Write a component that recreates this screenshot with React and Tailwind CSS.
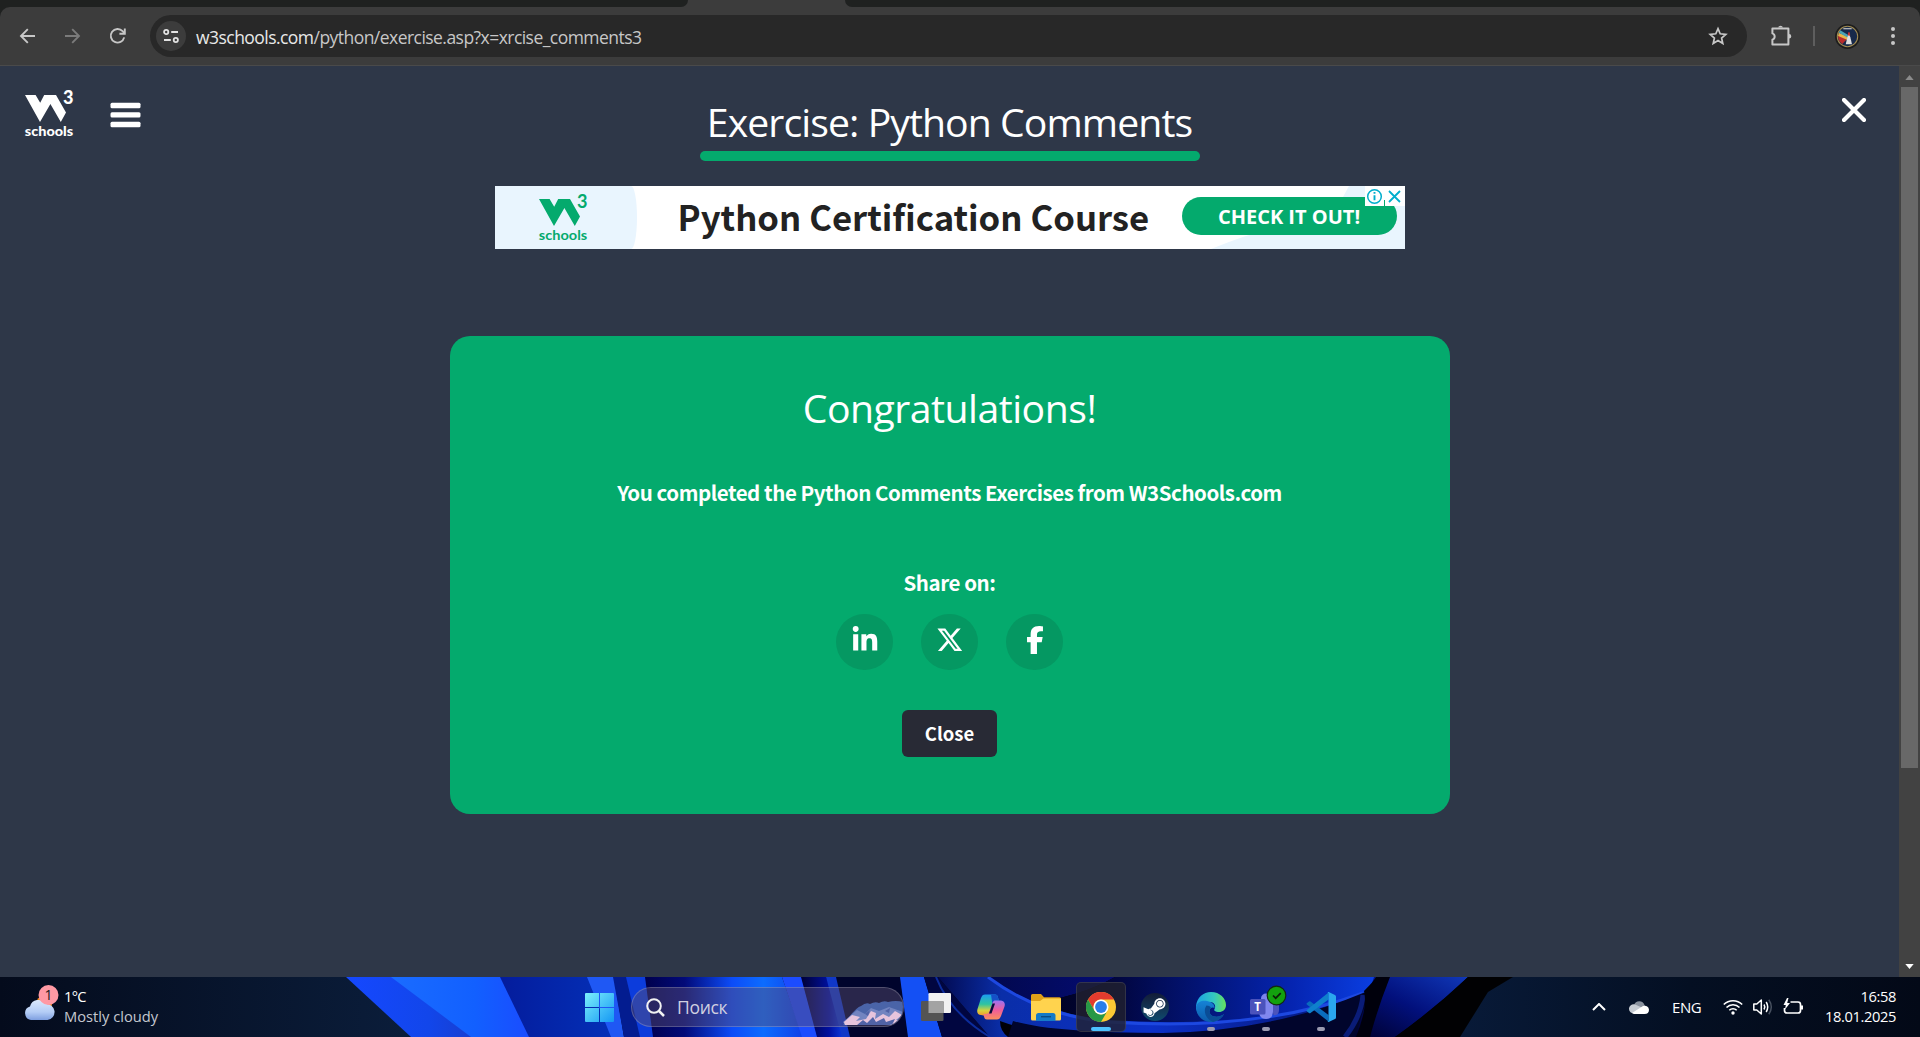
import React from "react";
import { FaLinkedinIn, FaFacebookF, FaXTwitter, FaSteamSymbol } from "react-icons/fa6";

const segoe = "font-['Open_Sans','Noto_Sans',sans-serif]";
const source = "font-['Noto_Sans_CJK_SC','Open_Sans',sans-serif]";

function W3Logo({ className, weight }) {
  return (
    <svg viewBox="0 0 54 58" className={className} fill="currentColor">
      <path d="M1 10h10.600l4.600 7.800L20.200 10H32l10 17.600L36.800 37 26.400 18.900 16 37z" />
      <text x="39" y="19.300" fontSize="18.500" fontWeight={weight} fontFamily="Lato, sans-serif" textLength="10.500" lengthAdjust="spacingAndGlyphs">3</text>
      <text x="0.800" y="51.200" fontSize="14" fontWeight={weight} fontFamily="Lato, sans-serif" textLength="48.400" lengthAdjust="spacingAndGlyphs">schools</text>
    </svg>
  );
}

function Toolbar() {
  return (
    <header className="bg-[#1f2120]">
      <div className="flex h-[7px] justify-between bg-[#3c3c3c]">
        <div className="w-[688px] rounded-br-[10px] bg-[#1f2120]" />
        <div className="w-[1075px] rounded-bl-[10px] bg-[#1f2120]" />
      </div>
      <div className="flex h-[59px] items-center rounded-t-[10px] border-b border-[#4a4a4a] bg-[#3c3c3c]">
        <div className="ml-[17px] flex w-[133px] gap-[23px] text-[#c7c7c7]">
          <svg viewBox="0 0 22 22" className="size-[22px]" fill="none" stroke="currentColor" strokeWidth="1.9"><path d="M18 11H4.500M10.800 4.200 4 11l6.800 6.800" /></svg>
          <svg viewBox="0 0 22 22" className="size-[22px] text-[#7b7b7b]" fill="none" stroke="currentColor" strokeWidth="1.9"><path d="M3 11h13.500M10.200 4.200 17 11l-6.800 6.800" /></svg>
          <svg viewBox="0 0 22 22" className="size-[22px]" fill="none" stroke="currentColor" strokeWidth="1.9"><path d="M17.200 12.400A6.800 6.800 0 1 1 15.600 6.200L17.600 8.400" /><path d="M17.800 3.400v5.400h-5.400" /></svg>
        </div>
        <div className="flex h-[42px] w-[1597px] items-center rounded-full bg-[#282828] pl-[6px] pr-[19px]">
          <div className="flex size-[30px] items-center justify-center rounded-full bg-[#3c3c3c] text-[#e3e3e3]">
            <svg viewBox="0 0 16 16" className="size-4" fill="none" stroke="currentColor" strokeWidth="1.8"><circle cx="3.2" cy="4" r="2.1" /><path d="M8.200 4H15M1 12h6.800" /><circle cx="12.8" cy="12" r="2.1" /></svg>
          </div>
          <div className={`ml-[10px] mt-[1px] text-[17.500px] leading-[24px] tracking-[-0.54px] text-[#c7c7c7] ${segoe}`}>
            <span className="text-[#e8e8e8]">w3schools.com</span>/python/exercise.asp?x=xrcise_comments3
          </div>
          <svg viewBox="0 0 20 20" className="ml-auto size-[20px] text-[#c7c7c7]" fill="none" stroke="currentColor" strokeWidth="1.7"><path d="m10 2.600 2.200 5.200 5.600.5-4.200 3.700 1.200 5.500L10 14.600l-4.800 2.900 1.200-5.500-4.200-3.700 5.600-.5z" /></svg>
        </div>
        <svg viewBox="0 0 24 24" className="mb-[2px] ml-[22px] size-[24px] text-[#c7c7c7]" fill="none" stroke="currentColor" strokeWidth="2"><path d="M3.400 5.400h16v16h-16v-4.600a3.400 3.400 0 0 0 0-6.400z" strokeLinejoin="round" /><path d="M9.200 4.600a2.500 2.500 0 0 1 4.800 0zM20 11a2.300 2.300 0 0 1 0 4.600z" fill="currentColor" stroke="none" /></svg>
        <div className="ml-[20px] h-[20px] w-[2px] bg-[#5e5e5e]" />
        <svg viewBox="0 0 24 24" className="ml-[20px] size-[25px]">
          <circle cx="12" cy="12" r="12" fill="#1d1d1d" />
          <circle cx="12" cy="12" r="9.800" fill="#17294a" stroke="#a08b52" strokeWidth="1" />
          <path d="M3 10.500 13 13l-6 6.300A10 10 0 0 1 3 10.500z" fill="#b92c2c" />
          <path d="m3.600 8.500 9 3.700-1 3L3 11.500z" fill="#e8b64a" />
          <path d="m5 6 8.500 5-1.500 2-8.300-4.600z" fill="#4ba3b5" />
          <path d="m13.300 9 1.500 4 1.500 6.500h-6l1.500-6.500z" fill="#e0e0e0" />
          <path d="M12.700 8h1.400l.5 3h-2.400z" fill="#c83232" />
          <path d="M8 4.500h8" stroke="#bababa" strokeWidth="1.200" />
        </svg>
        <svg viewBox="0 0 6 20" className="ml-[30px] h-[20px] w-[6px]" fill="#c7c7c7"><circle cx="3" cy="3" r="2" /><circle cx="3" cy="10" r="2" /><circle cx="3" cy="17" r="2" /></svg>
      </div>
    </header>
  );
}

function AdBanner() {
  return (
    <div className="relative mt-[25px] flex h-[63px] w-[910px] items-center overflow-hidden bg-white">
      <div className="flex h-[63px] w-[142px] items-center bg-[#e9f5fe] pl-[43px] text-[#04aa6d] [border-radius:0_6px_6px_0/0_31px_31px_0]">
        <W3Logo className="h-[58px] w-[54px]" weight="700" />
      </div>
      <svg viewBox="0 0 230 63" className="absolute right-0 top-0 h-[63px] w-[230px]" fill="#e9f5fe"><path d="M230 0h-56l-12 22v20h-62Q72 48 36 63h194z" /></svg>
      <div className={`mb-[3px] ml-[41px] text-[34.700px] font-bold leading-[40px] whitespace-nowrap text-[#222] ${source}`}>Python Certification Course</div>
      <div className="absolute left-[687px] top-[11px] flex h-[38px] w-[215px] items-center justify-center rounded-full bg-[#04aa6d]">
        <span className="mt-[2px] font-['Open_Sans',sans-serif] text-[20px] font-bold leading-[24px] whitespace-nowrap text-white">CHECK IT OUT!</span>
      </div>
      <div className="absolute right-0 top-0 flex h-[20px] w-[40px] bg-white">
        <svg viewBox="0 0 40 20" className="h-[20px] w-[40px]" fill="none" stroke="#00aecd" strokeWidth="1.500"><circle cx="9.500" cy="10.500" r="6.800" /><path d="M9.500 9.300v5M9.500 6v1.800" strokeWidth="1.900" /><path d="m24 5 11 11m0-11L24 16" strokeWidth="1.800" /><path d="M19.500 14v6" stroke="#04aa6d" strokeWidth="1" /></svg>
      </div>
    </div>
  );
}

function ShareButton({ children }) {
  return <div className="flex h-[56px] w-[57px] items-center justify-center rounded-full bg-[#059862] pb-[4px] text-white">{children}</div>;
}

function Page() {
  return (
    <main className="flex h-[911px]">
      <div className="relative flex w-[1899px] flex-col items-center bg-[#2e3748]">
        <div className="absolute left-[24px] top-[19px] flex text-white">
          <W3Logo className="h-[58px] w-[54px]" weight="900" />
          <svg viewBox="0 0 30 26" className="ml-[32px] mt-[17px] h-[26px] w-[31px]" fill="currentColor"><rect width="30" height="5.400" y="0.800" rx="1.500" /><rect width="30" height="5.400" y="10.200" rx="1.500" /><rect width="30" height="5.400" y="19.800" rx="1.500" /></svg>
        </div>
        <svg viewBox="0 0 24 24" className="absolute right-[33px] top-[32px] size-[24px]" stroke="#fff" strokeWidth="4.200" strokeLinecap="round"><path d="m2 2 20 20M22 2 2 22" /></svg>
        <h1 className={`mt-[28px] flex h-[57px] w-[500px] justify-center text-[39.200px] leading-[56px] tracking-[-0.93px] whitespace-nowrap text-white ${segoe}`}>Exercise: Python Comments</h1>
        <div className="h-[10px] w-[500px] rounded-full bg-[#04aa6d]" />
        <AdBanner />
        <section className="mt-[87px] flex h-[478px] w-[1000px] flex-col items-center rounded-[20px] bg-[#04aa6d] text-white">
          <h2 className={`mt-[44px] text-[39.200px] leading-[56px] tracking-[-0.5px] ${segoe}`}>Congratulations!</h2>
          <p className={`mt-[41px] text-[20.500px] font-bold leading-[30px] tracking-[-0.46px] ${source}`}>You completed the Python Comments Exercises from W3Schools.com</p>
          <p className={`mt-[60px] text-[20.500px] font-bold leading-[30px] tracking-[-0.42px] ${source}`}>Share on:</p>
          <div className="mt-[17px] flex gap-[28px]">
            <ShareButton><FaLinkedinIn className="size-[28px]" /></ShareButton>
            <ShareButton><FaXTwitter className="size-[27.500px]" /></ShareButton>
            <ShareButton><FaFacebookF className="size-[28px]" /></ShareButton>
          </div>
          <button className={`mt-[40px] h-[47px] w-[95px] rounded-[6px] bg-[#282a35] pb-[2px] text-[18.500px] font-bold leading-[28px] ${source}`}>Close</button>
        </section>
      </div>
      <div className="flex w-[21px] flex-col items-center justify-between bg-[#424242]">
        <svg viewBox="0 0 10 6" className="mt-[9px] h-[5px] w-[9px]" fill="#8b8b8b"><path d="M5 0l5 6H0z" /></svg>
        <div className="mb-auto mt-[7px] h-[681px] w-[17px] bg-[#686868]" />
        <svg viewBox="0 0 10 6" className="mb-[8px] h-[5px] w-[9px]" fill="#fff"><path d="M5 6l5-6H0z" /></svg>
      </div>
    </main>
  );
}

function Wallpaper() {
  return (
    <svg viewBox="0 0 1920 60" className="absolute inset-0 h-[60px] w-full" preserveAspectRatio="none">
      <defs>
        <linearGradient id="sideL"><stop offset="0" stopColor="#040b1c" /><stop offset="1" stopColor="#0b1e3c" /></linearGradient>
        <linearGradient id="sideR"><stop offset="0" stopColor="#081a38" /><stop offset=".5" stopColor="#040f22" /><stop offset="1" stopColor="#030917" /></linearGradient>
        <linearGradient id="b1"><stop offset="0" stopColor="#1548ff" /><stop offset=".6" stopColor="#1246ea" /><stop offset="1" stopColor="#1a3cc8" /></linearGradient>
        <linearGradient id="b2"><stop offset="0" stopColor="#1a6cff" /><stop offset=".6" stopColor="#1260ff" /><stop offset="1" stopColor="#1a4cff" /></linearGradient>
        <linearGradient id="b3"><stop offset="0" stopColor="#041c9c" /><stop offset="1" stopColor="#0430b8" /></linearGradient>
        <linearGradient id="b4"><stop offset="0" stopColor="#00004c" /><stop offset=".25" stopColor="#020a78" /><stop offset=".55" stopColor="#0c4cf8" /><stop offset=".75" stopColor="#0c6cff" /><stop offset="1" stopColor="#1040e8" /></linearGradient>
        <linearGradient id="b5"><stop offset="0" stopColor="#000034" /><stop offset=".6" stopColor="#0010a0" /><stop offset="1" stopColor="#1048f0" /></linearGradient>
        <linearGradient id="b6"><stop offset="0" stopColor="#000018" /><stop offset=".2" stopColor="#010640" /><stop offset=".6" stopColor="#0524b0" /><stop offset=".85" stopColor="#0c46f0" /><stop offset="1" stopColor="#0a2fa8" /></linearGradient>
        <linearGradient id="b7" x1="0" y1="1" x2="1" y2="0"><stop offset="0" stopColor="#00002c" /><stop offset=".5" stopColor="#02107c" /><stop offset="1" stopColor="#1038b8" /></linearGradient>
        <linearGradient id="b8"><stop offset="0" stopColor="#020a50" /><stop offset=".15" stopColor="#0a2ea8" /><stop offset=".5" stopColor="#0c30c8" /><stop offset="1" stopColor="#04146c" /></linearGradient>
        <linearGradient id="b9"><stop offset="0" stopColor="#02084c" /><stop offset="1" stopColor="#040c74" /></linearGradient>
      </defs>
      <rect width="1920" height="60" fill="#000006" />
      <rect width="430" height="60" fill="url(#sideL)" />
      <path d="M346 0h60l80 60h-75z" fill="url(#b1)" />
      <path d="M391 0h110l29 60h-59z" fill="url(#b2)" />
      <path d="M500 0h90l24 60h-85z" fill="url(#b3)" />
      <path d="M587 0h27l10 60h-13z" fill="#1f58f4" />
      <path d="M613 0h14l14 60h-17z" fill="#031c90" />
      <path d="M626 0h30v60h-16z" fill="#0c3cdc" />
      <path d="M645 0h137l21 60H653z" fill="url(#b4)" />
      <path d="M782 0h20l16 60h-16z" fill="#1c4cff" />
      <path d="M801 0h30l17 60h-31z" fill="url(#b5)" />
      <path d="M826 0h75l8 60h-61z" fill="#00042c" />
      <path d="M826 0h10l14 60h-8z" fill="#1038c8" />
      <path d="M900 0h24l18 60h-34z" fill="#1450f4" />
      <path d="M924 0h14l52 60h-48z" fill="#010640" />
      <path d="M985 0h130Q1080 20 1030 26 1005 14 985 0z" fill="url(#b9)" />
      <path d="M1100 0h364L1363 16Q1290 48 1150 46 1080 42 1030 26q50-6 85-26z" fill="url(#b6)" />
      <path d="M938 0h50q50 36 120 43 150 10 255-27-100 50-190 48-120 0-173-20 0 10 8 16h-18z" fill="url(#b8)" />
      <path d="M936 0q14 36 54 60" fill="none" stroke="#0c2c9c" strokeWidth="2" />
      <path d="M988 0q50 38 120 45 150 10 255-29" fill="none" stroke="#1d48e0" strokeWidth="3" />
      <path d="M1363 16q-90 38-200 40-110 0-150-12l-5 16h360q12-26 8-42z" fill="#01052c" />
      <path d="M1363 18q-2 22-18 42" fill="none" stroke="#0a1c78" strokeWidth="5" />
      <path d="M1374 0h94q-34 32-73 60h-40z" fill="url(#b7)" />
      <path d="M1364 14Q1374 4 1376 0h14q-12 30-20 60h-14q12-30 8-46z" fill="#00000c" />
      <path d="M1468 0h48l-56 60h-65q40-28 73-60z" fill="#010103" />
      <path d="M1513 0h407v60h-460l28-45z" fill="url(#sideR)" />
    </svg>
  );
}

function ChromeIcon() {
  return (
    <svg viewBox="0 0 30 30" className="size-[30px]">
      <circle cx="15" cy="15" r="15" fill="#fcc934" />
      <path d="M2 7.500A15 15 0 0 1 28 7.500H15a7.500 7.500 0 0 0-6.500 11.300z" fill="#e33b2e" />
      <path d="M2 7.500 8.500 18.800A7.500 7.500 0 0 0 21.500 18.800L15 30A15 15 0 0 1 2 7.500z" fill="#279847" />
      <circle cx="15" cy="15" r="7.500" fill="#fff" /><circle cx="15" cy="15" r="5.900" fill="#2a7de9" />
    </svg>
  );
}

function EdgeIcon() {
  return (
    <svg viewBox="0 0 30 30" className="size-[30px]">
      <defs>
        <linearGradient id="e1"><stop offset="0" stopColor="#1aa0e4" /><stop offset=".6" stopColor="#34c8c0" /><stop offset="1" stopColor="#66e05c" /></linearGradient>
        <linearGradient id="e2" x1="0" y1="0" x2="0" y2="1"><stop offset="0" stopColor="#1583d6" /><stop offset="1" stopColor="#0c5cab" /></linearGradient>
      </defs>
      <path d="M0 14C1 5.500 7.300 0 15 0c9 0 15 6.500 15 13 0 4.500-3.300 7-7 7-3.500 0-5.500-1.400-4.500-3 2-3.500-.5-7-5-7C7 10 1.500 13 0 19z" fill="url(#e1)" />
      <path d="M0 15C1 9.500 7 8 11 9c5.500 1 8 4 7.500 7-2-1.500-5 0-5 3.500 0 5 8 7.500 14.500 2.500C25.500 27 20.500 30 15 30 6.500 30 0 23.500 0 15z" fill="url(#e2)" />
      <path d="M10.500 13.500C7 18 9 27 17 29.900c5-.8 9-4 11-7.900-6.500 5-14.500 2.500-14.500-2.500 0-1.800.6-3 1.500-3.700-1-1.600-2.500-2.300-4.500-2.300z" fill="#0a4d96" />
    </svg>
  );
}

const apps = [
  { name: "Task view", icon: (
    <svg viewBox="0 0 30 28" className="h-[28px] w-[30px]"><rect x="7.500" width="22.500" height="20" rx="1.300" fill="#f1f1f1" /><rect y="8" width="22.500" height="20" rx="1.300" fill="#545454" /><path d="M7.500 8h15v12h-15z" fill="#a3a3a3" /></svg>) },
  { name: "Copilot", icon: (
    <svg viewBox="0 0 28 26" className="h-[26px] w-[28px]">
      <defs>
        <linearGradient id="c1" x1="0" y1="0" x2="0" y2="1"><stop offset="0" stopColor="#1b9df0" /><stop offset=".45" stopColor="#2fc4a0" /><stop offset=".75" stopColor="#d9d23c" /><stop offset="1" stopColor="#f4912a" /></linearGradient>
        <linearGradient id="c2" x1="0" y1="0" x2="0" y2="1"><stop offset="0" stopColor="#9b72f2" /><stop offset=".5" stopColor="#ee5c9c" /><stop offset="1" stopColor="#fb8f5c" /></linearGradient>
      </defs>
      <path d="M8 .5h10c2 0 2.500 1 3 3l.8 3h-3c-2 0-3 1-3.500 3l-2.800 9.500c-.6 2-1.500 3-3.500 3L4 21C1 20.500-.5 19 .5 15L4 4C5 1.500 6 .5 8 .5z" fill="url(#c1)" />
      <path d="M14 .5h4c2 0 2.500 1 3 3l.8 3h-3c-2 0-3 1-3.500 3z" fill="#1550c8" />
      <path d="M20 25.500H10c-2 0-2.500-1-3-3l-.6-2.500H9c2 0 3-1 3.500-3l3-8c.6-2 1.500-2.500 3.500-2.500h5c3 .5 4.500 2.500 3.500 6L24 22c-1 2.500-2 3.500-4 3.500z" fill="url(#c2)" />
      <path d="M15.500 9.500H18l-3.500 10H12z" fill="#070c38" />
    </svg>) },
  { name: "Explorer", icon: (
    <svg viewBox="0 0 30 27" className="mt-px h-[27px] w-[30px]"><path d="M0 1.500Q0 0 1.500 0H10l3 3.200h15.500q1.500 0 1.500 1.500V12H0z" fill="#e0a018" /><path d="M0 7h9l3.500-2.500H30V25q0 1.500-1.500 1.500h-27Q0 26.500 0 25z" fill="#ffd34e" /><path d="M5 27v-5.500Q5 19 7.500 19h14.500q2.500 0 2.500 2.500V27z" fill="#157ac8" /><path d="M10 22.700h10" stroke="#0b4c86" strokeWidth="1.400" /></svg>) },
  { name: "Chrome", active: true, icon: <ChromeIcon /> },
  { name: "Steam", icon: (
    <div className="mr-[2px] flex size-[28px] items-center justify-center rounded-full bg-linear-to-b from-[#121c38] to-[#0c4a6e]"><FaSteamSymbol className="size-[25px] text-white" /></div>) },
  { name: "Edge", dot: true, icon: <EdgeIcon /> },
  { name: "Teams", dot: true, icon: (
    <svg viewBox="0 0 37 37" className="h-[37px] w-[37px] translate-x-[3px] -translate-y-[4px]"><circle cx="16" cy="13.500" r="5" fill="#7b83eb" /><path d="M20 16h9v9q0 6-5.500 5z" fill="#4b53bc" /><path d="M9 17h14v9q0 8-7 8-6 0-7-6z" fill="#8087ee" /><rect x="0" y="14" width="15.500" height="15.500" rx="1.500" fill="#4b53bc" /><text x="7.700" y="26" fontSize="11.500" fontWeight="700" fill="#fff" textAnchor="middle" fontFamily="Open Sans, sans-serif">T</text><circle cx="26.500" cy="10.500" r="9.300" fill="#13a10e" stroke="#12290f" strokeWidth="1.200" /><path d="m23 10.500 2.700 2.700 5-5" fill="none" stroke="#0a2008" strokeWidth="1.700" /></svg>) },
  { name: "Code", dot: true, icon: (
    <svg viewBox="0 0 30 30" className="size-[30px]"><path d="M1 11 3 9.500q.8-.5 1.500 0L22.500 23v6.500L.8 12.500Q0 11.700 1 11z" fill="#0a6cbd" /><path d="M1 19.500 3 21q.8.500 1.500 0L22.500 7.500V.5L.8 18Q0 18.800 1 19.500z" fill="#0f80cc" /><path d="M21.500.6q.7-.8 1.700-.4L29 3q1 .5 1 1.500v21q0 1-1 1.500l-5.800 2.800q-1 .4-1.700-.3l1-.7V1.200z" fill="#2aa6ee" /></svg>) },
];

function Taskbar() {
  return (
    <footer className={`relative h-[60px] overflow-hidden ${segoe}`}>
      <Wallpaper />
      <div className="relative flex h-[60px] items-center">
        <div className="flex h-full w-[560px] pl-[23px] pt-[8px] text-[14.700px] leading-[20px] text-white">
          <svg viewBox="0 0 36 36" className="size-[36px]">
            <defs><linearGradient id="cl" x1="0" y1="0" x2="0" y2="1"><stop offset="0" stopColor="#dbe8fb" /><stop offset=".6" stopColor="#b4cdf6" /><stop offset="1" stopColor="#7e9fe0" /></linearGradient></defs>
            <circle cx="21" cy="19" r="8" fill="#f28a1c" />
            <path d="M8 35a7 7 0 0 1-1-13.600A8.500 8.500 0 0 1 22.500 19a8 8 0 0 1 2 16z" fill="url(#cl)" />
            <circle cx="25.500" cy="10" r="10" fill="#ff99a4" />
            <text x="25.500" y="15" fontSize="14" textAnchor="middle" fill="#1b1b1b" fontFamily="Open Sans, sans-serif">1</text>
          </svg>
          <div className="ml-[5px] mt-px"><div className="tracking-[-0.7px]">1°C</div><div className="text-[#c4c8d0]">Mostly cloudy</div></div>
        </div>
        <svg viewBox="0 0 29 29" className="ml-[25px] size-[29px]"><defs><linearGradient id="wn" x1="0" y1="0" x2="1" y2="1"><stop offset="0" stopColor="#7cf0fc" /><stop offset="1" stopColor="#1497f4" /></linearGradient></defs><path d="M0 1q0-1 1-1h13v14H0zM15 0h13q1 0 1 1v13H15zM0 15h14v14H1q-1 0-1-1zM15 15h14v13q0 1-1 1H15z" fill="url(#wn)" /></svg>
        <div className="ml-[17px] flex h-[40px] w-[273px] items-center overflow-hidden rounded-full border border-white/20 bg-[#5a5070]/45 pl-[14px]">
          <svg viewBox="0 0 19 19" className="size-[19px]" fill="none" stroke="#f2f2f2" strokeWidth="2"><circle cx="8" cy="8" r="6.800" /><path d="m13 13 5 5" strokeWidth="2.500" /></svg>
          <span className="ml-[12px] text-[17.500px] leading-[24px] tracking-[-0.3px] text-[#d0d0e0]">Поиск</span>
          <svg viewBox="0 0 60 24" className="ml-auto mt-[12px] h-[24px] w-[60px]"><path d="M6 16Q14 6 18 5q5-4 9-2 5-3 9-1 5-3 9-1 8-2 15 0v23H0z" fill="#4a64a8" /><path d="M0 21 14 9l8 4 6-6 8 3 10-4 14 5v13H2z" fill="#7284c0" /><path d="M1 21 9 14l8 2-4 4 10-2 5-8 5 2-1 6 8-5 6 3 6-6 7 4-6 5 5 1-8 4H2z" fill="#e6c4dc" /><path d="m14 24 6-5 4 3 6-6 3 5 8-4 2 4 9-3-3 6zM22 13l5-4-2 6zM42 10l5-3-1 5z" fill="#5062a6" /></svg>
        </div>
        <div className="ml-[4px] flex">
          {apps.map((a) => (
            <div key={a.name} className="flex w-[55px] justify-center">
              <div className={a.active ? "relative flex size-[50px] items-center justify-center rounded-[5px] border border-white/10 bg-[#22222e]/80" : "relative flex size-[50px] items-center justify-center"}>
                {a.icon}
                {a.active && <div className="absolute bottom-0 h-[4px] w-[20px] rounded-full bg-[#4cc2ff]" />}
                {a.dot && <div className="absolute bottom-[1px] h-[4px] w-[8px] rounded-full bg-[#9a9ab0]" />}
              </div>
            </div>
          ))}
        </div>
        <div className="ml-auto flex items-center pr-[24px] text-white">
          <svg viewBox="0 0 14 8" className="h-[8px] w-[14px]" fill="none" stroke="#fff" strokeWidth="2"><path d="m1 7 6-6 6 6" /></svg>
          <svg viewBox="0 0 20 14" className="ml-[23px] h-[14px] w-[20px]"><path d="M5 5a5.500 5.500 0 0 1 10.500 0L17 8H4z" fill="#8a929e" /><path d="M0 9a4.500 4.500 0 0 1 6-4.500L14 8l-9 5.500A4.500 4.500 0 0 1 0 9z" fill="#c6cbd2" /><path d="M3 13 14 6q5-1 6 3.500 0 4.500-4.500 4.500H5z" fill="#fff" /></svg>
          <span className="ml-[23px] w-[29px] text-[15px] leading-[20px] tracking-[-0.4px]">ENG</span>
          <svg viewBox="0 0 20 16" className="ml-[22px] h-[16px] w-[20px]" fill="none" stroke="#fff" strokeWidth="1.600"><path d="M.8 5.500a13 13 0 0 1 18.400 0M3.500 8.500a9 9 0 0 1 13 0M6.300 11.300a5.300 5.300 0 0 1 7.400 0" /><circle cx="10" cy="14" r="1.700" fill="#fff" stroke="none" /></svg>
          <svg viewBox="0 0 20 18" className="ml-[10px] h-[18px] w-[20px]" fill="none" stroke="#fff" strokeWidth="1.500"><path d="M.8 6h3l4.500-4v14l-4.500-4h-3z" strokeLinejoin="round" /><path d="M11 6.500q1.600 2.500 0 5M13.200 4q3 5 0 10" /><path d="M15.800 1.800q5 7.200 0 14.400" stroke="#47505f" /></svg>
          <svg viewBox="0 0 20 17" className="mb-[2px] ml-[10px] h-[17px] w-[20px]" fill="none" stroke="#fff" strokeWidth="1.700"><path d="M7.500 4H15q2.500 0 2.500 2.500v6Q17.500 15 15 15H4q-2.500 0-2.500-2.500V10" /><path d="M19 7.500v4" strokeWidth="2" /><path d="M4 0 .5 7h2.300L2 11.500 7 5H4.200L5.500 0z" fill="#fff" stroke="none" /></svg>
          <div className="mb-[2px] ml-[17px] flex w-[76px] flex-col items-end text-[14.700px] leading-[20px] tracking-[-0.4px]"><span>16:58</span><span>18.01.2025</span></div>
        </div>
      </div>
    </footer>
  );
}

export default function App() {
  return (
    <div className="h-[1037px] w-[1920px] overflow-hidden">
      <Toolbar />
      <Page />
      <Taskbar />
    </div>
  );
}
